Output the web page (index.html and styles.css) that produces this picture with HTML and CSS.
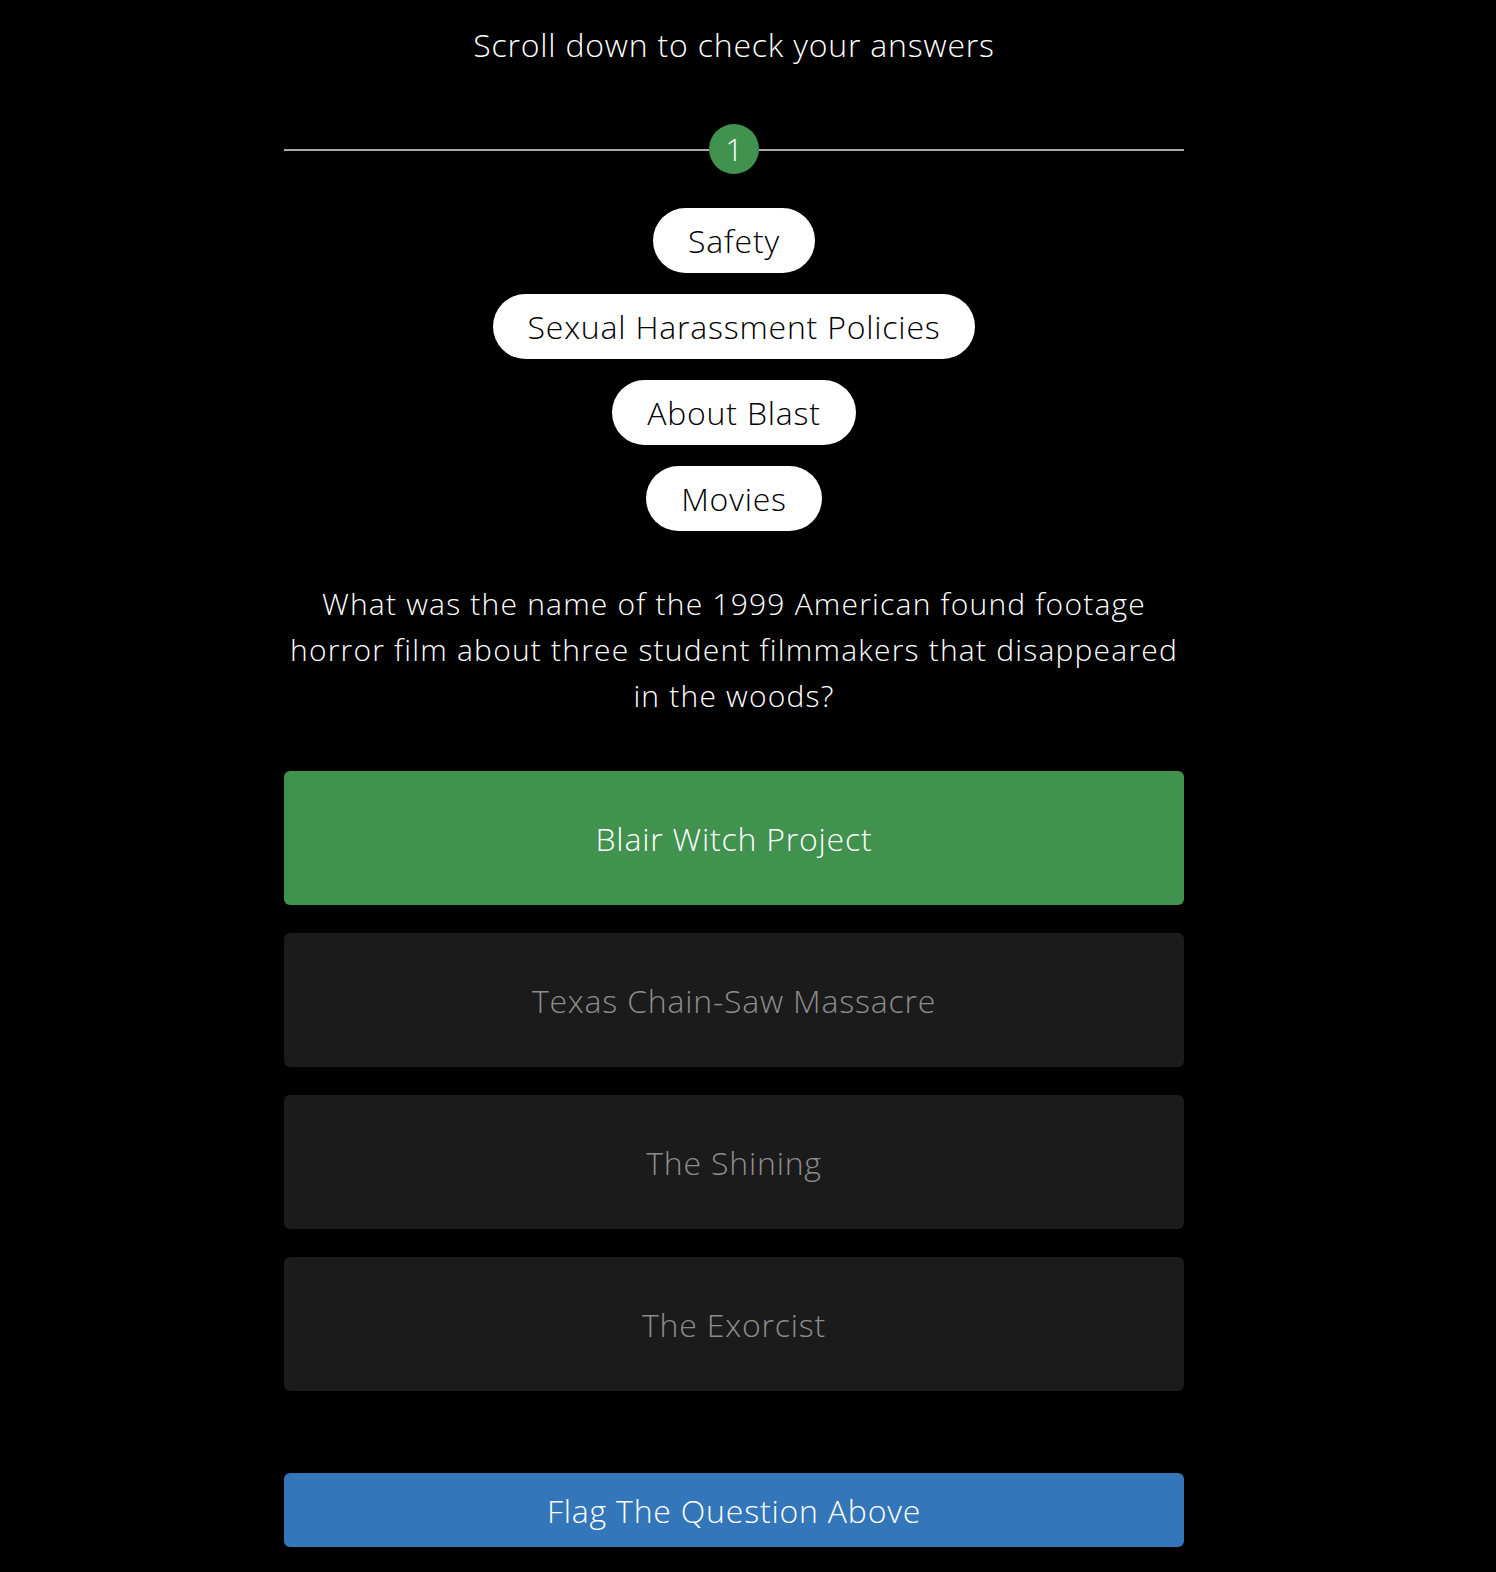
FILE: index.html
```html
<!DOCTYPE html>
<html lang="en">
<head>
<meta charset="utf-8">
<title>Quiz answers</title>
<link rel="stylesheet" href="styles.css">
</head>
<body>
<main class="page">
  <h1 class="title">Scroll down to check your answers</h1>

  <div class="divider">
    <span class="rule"></span>
    <span class="number">1</span>
    <span class="rule"></span>
  </div>

  <ul class="tags">
    <li class="tag">Safety</li>
    <li class="tag">Sexual Harassment Policies</li>
    <li class="tag">About Blast</li>
    <li class="tag">Movies</li>
  </ul>

  <p class="question">What was the name of the 1999 American found footage horror film about three student filmmakers that disappeared in the woods?</p>

  <div class="answers">
    <div class="answer answer-correct">Blair Witch Project</div>
    <div class="answer">Texas Chain-Saw Massacre</div>
    <div class="answer">The Shining</div>
    <div class="answer">The Exorcist</div>
  </div>

  <button class="flag" type="button">Flag The Question Above</button>
</main>
</body>
</html>
```

FILE: styles.css
```css
html, body {
  margin: 0;
  padding: 0;
  background: #000;
}

body {
  font-family: "Open Sans", Lato, "Liberation Sans", sans-serif;
  font-weight: 300;
  color: #fff;
  letter-spacing: 0.8px;
}

.page {
  width: 900px;
  margin-left: 284px;
  padding-bottom: 26px;
}

.title {
  margin: 0;
  padding-top: 22px;
  font-size: 32px;
  font-weight: 300;
  line-height: 46px;
  text-align: center;
}

.divider {
  display: flex;
  align-items: center;
  margin-top: 56px;
  height: 50px;
}

.rule {
  flex: 1;
  height: 2px;
  background: #a9a9a9;
  margin-top: 2px;
}

.number {
  width: 50px;
  height: 50px;
  border-radius: 50%;
  background: #41914f;
  color: #fff;
  font-size: 31px;
  line-height: 50px;
  text-align: center;
  letter-spacing: 0;
}

.tags {
  list-style: none;
  margin: 34px 0 0;
  padding: 0;
  display: flex;
  flex-direction: column;
  align-items: center;
  gap: 21px;
}

.tag {
  display: flex;
  align-items: center;
  justify-content: center;
  height: 65px;
  padding: 0 35px;
  background: #fff;
  color: #000;
  border-radius: 33px;
  font-size: 32px;
}

.question {
  margin: 50px 0 0;
  font-size: 30px;
  line-height: 46px;
  letter-spacing: 1.2px;
  text-align: center;
}

.answers {
  display: flex;
  flex-direction: column;
  gap: 28px;
  margin-top: 52px;
}

.answer {
  height: 134px;
  display: flex;
  align-items: center;
  justify-content: center;
  border-radius: 6px;
  background: #1b1b1b;
  color: #8d8d8d;
  font-size: 32px;
}

.answer-correct {
  background: #41914f;
  color: #fff;
}

.flag {
  display: block;
  width: 100%;
  height: 74px;
  margin-top: 82px;
  border: 0;
  border-radius: 6px;
  background: #3376b9;
  color: #fff;
  font-family: inherit;
  font-weight: 300;
  font-size: 32px;
  letter-spacing: inherit;
  padding: 0;
}
```
